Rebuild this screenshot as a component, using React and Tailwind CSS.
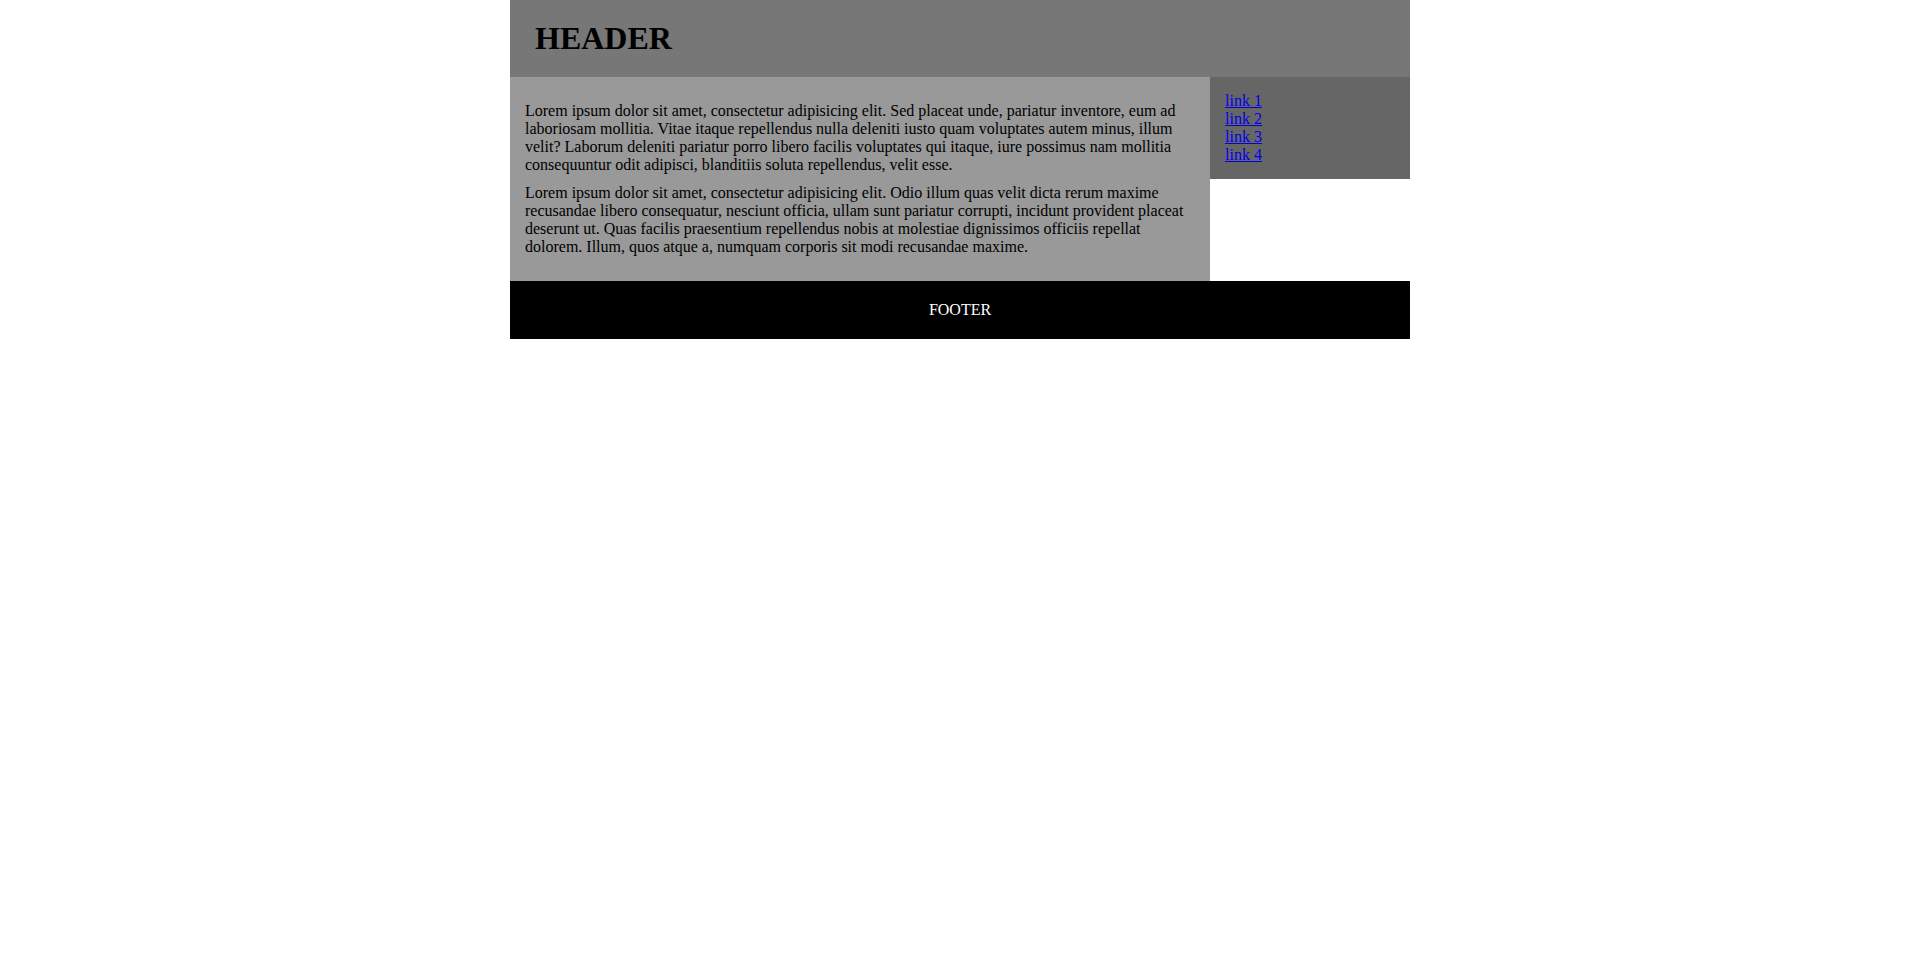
export default function App() {
  const links = ['link 1', 'link 2', 'link 3', 'link 4'];

  return (
    <div className="w-[900px] mx-auto font-['Liberation_Serif',serif] text-base leading-[normal] text-black">
      {/* Header */}
      <header className="bg-[#777777] py-5 px-[25px]">
        <h1 className="text-[32px] font-bold leading-[normal] m-0">HEADER</h1>
      </header>

      <div className="flex items-start">
        {/* Main content */}
        <main className="w-[700px] bg-[#999999] p-[15px]">
          <p className="my-[10px]">
            Lorem ipsum dolor sit amet, consectetur adipisicing elit. Sed placeat unde, pariatur inventore, eum ad laboriosam mollitia. Vitae itaque repellendus nulla deleniti iusto quam voluptates autem minus, illum velit? Laborum deleniti pariatur porro libero facilis voluptates qui itaque, iure possimus nam mollitia consequuntur odit adipisci, blanditiis soluta repellendus, velit esse.
          </p>
          <p className="my-[10px]">
            Lorem ipsum dolor sit amet, consectetur adipisicing elit. Odio illum quas velit dicta rerum maxime recusandae libero consequatur, nesciunt officia, ullam sunt pariatur corrupti, incidunt provident placeat deserunt ut. Quas facilis praesentium repellendus nobis at molestiae dignissimos officiis repellat dolorem. Illum, quos atque a, numquam corporis sit modi recusandae maxime.
          </p>
        </main>

        {/* Sidebar */}
        <aside className="w-[200px] bg-[#666666] p-[15px]">
          {links.map((l) => (
            <a key={l} href="#" className="block text-[#0000ee] underline">
              {l}
            </a>
          ))}
        </aside>
      </div>

      {/* Footer */}
      <footer className="bg-black text-white text-center py-5">FOOTER</footer>
    </div>
  );
}
